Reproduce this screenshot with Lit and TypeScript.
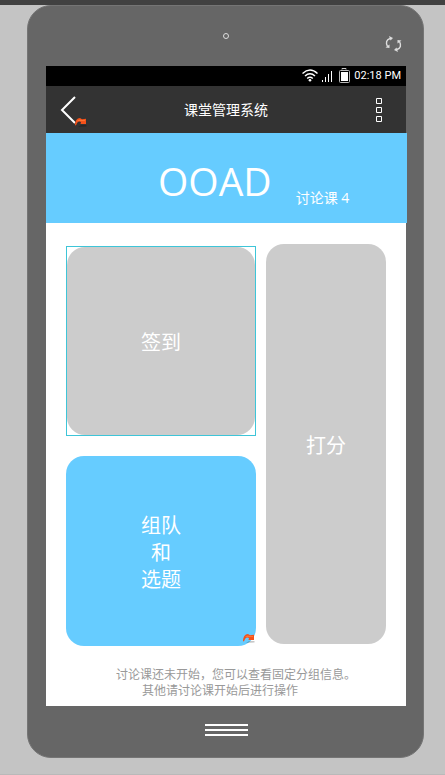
import { LitElement, html, css, svg } from "lit";
import { customElement, property } from "lit/decorators.js";

const LINK_MARK = svg`
  <path d="M3 10L6 8H11.500V9.500Z" fill="#000" opacity=".22"/>
  <path d="M0 8.500C0 4 2 1 5 1L7 2.200L11 1.800V7H5.500L6 5C3.500 3.500 2 5.500 1.200 8Z" fill="#f4511a"/>
  <path d="M2 4Q4 1.500 7 3H10V4H6Z" fill="#ff7330"/>`;

@customElement("link-mark")
export class LinkMark extends LitElement {
  static styles = css`
    :host { display: block; width: 12px; height: 11px; pointer-events: none; }
    svg { display: block; }
  `;
  render() {
    return html`<svg width="12" height="11" viewBox="0 0 12 11" aria-hidden="true">${LINK_MARK}</svg>`;
  }
}

@customElement("status-bar")
export class StatusBar extends LitElement {
  @property() time = "";

  static styles = css`
    :host {
      display: flex; align-items: center; justify-content: flex-end; gap: 4px;
      height: 20px; padding: 0 5px; background: #000; color: #fff;
      font: 11px/20px Roboto, "Noto Sans", sans-serif;
    }
    svg { display: block; }
  `;

  render() {
    return html`
      <svg width="48" height="16" viewBox="0 0 48 16" fill="none" stroke="#fff" aria-hidden="true">
        <path d="M0.500 5.500Q8 -1.500 15.500 5.500M3 8Q8 3.500 13 8M5.200 10.500Q8 8 10.800 10.500" stroke-width="1.500"/>
        <circle cx="8" cy="12.300" r="1.300" fill="#fff" stroke="none"/>
        <path d="M20.500 12V14M23.500 9V14M26.500 6V14M29.500 3V14" stroke-width="1"/>
        <path d="M40 1.500V0.500H44V1.500" stroke="#ccc"/>
        <rect x="37.500" y="2.500" width="10" height="12" rx="1" stroke="#bbb"/>
        <rect x="39" y="4" width="7" height="9" fill="#fff" stroke="none"/>
      </svg>
      <time>${this.time}</time>`;
  }
}

@customElement("app-root")
export class AppRoot extends LitElement {
  static styles = css`
    :host {
      display: block; box-sizing: border-box; min-height: 100vh;
      border-top: 5px solid #414141; border-bottom: 1px solid #b9b9b9;
      padding: 0 21px 16px 27px; background: #c4c4c4;
      font-family: "Open Sans", "Noto Sans CJK SC", sans-serif;
    }
    button {
      border: 0; padding: 0; margin: 0; background: none; color: inherit;
      font: inherit; cursor: pointer;
    }
    svg { display: block; }
    .phone {
      box-sizing: border-box; border: 1px solid #757575; border-radius: 24px;
      background: #666; padding: 0 17px 0 18px;
    }
    .top {
      position: relative; height: 60px; display: flex; justify-content: center;
    }
    .camera {
      width: 6px; height: 6px; box-sizing: border-box; margin-top: 27px;
      border: 1px solid #ddd; border-radius: 50%;
    }
    .rotate { position: absolute; right: 4px; top: 30px; }
    .screen { background: #fff; }
    .nav {
      position: relative; height: 47px; display: grid; align-items: center;
      grid-template-columns: 1fr auto 1fr; padding: 0 24px 0 14px;
      background: #333; color: #fff;
    }
    .nav h1 { margin: 0; padding-left: 10px; font-size: 14px; line-height: 20px; font-weight: 400; }
    .back { justify-self: start; }
    .menu { justify-self: end; }
    .nav-mark { position: absolute; left: 29px; top: 31px; }
    .hero {
      display: flex; align-items: center; gap: 24px; height: 90px;
      margin-right: -1px; padding-left: 112px; box-sizing: border-box;
      background: #6cf; color: #fff;
    }
    .hero h2 { margin: 0; padding-top: 6px; font-size: 39px; line-height: 50px; font-weight: 400; }
    .hero p { margin: 0; padding-top: 40px; font-size: 14px; line-height: 20px; }
    .tiles {
      display: grid; grid-template-columns: 190fr 120fr; gap: 20px 10px;
      padding: 23px 20px 0;
    }
    .tile {
      position: relative; height: 190px; border-radius: 18px; padding-top: 2px;
      background: #ccc; color: #fff; font-size: 20px; line-height: 27px;
    }
    .tile span { display: block; }
    .frame { border: 1px solid #3ec5d8; box-sizing: border-box; height: 190px; display: grid; }
    .frame .tile { height: auto; }
    .tall { grid-row: span 2; height: 400px; margin-top: -2px; }
    .blue { background: #6cf; }
    .tile-mark { position: absolute; right: 1px; bottom: 2px; }
    .note {
      margin: 0; padding: 21px 20px 7px 70px; color: #999;
      font-size: 12px; line-height: 16px;
    }
    .note span { display: block; }
    .note .second { padding-left: 26px; }
    .bottom { height: 51px; display: flex; justify-content: center; align-items: flex-start; }
    .home {
      display: grid; gap: 3px; width: 43px; margin-top: 18px;
    }
    .home i { display: block; height: 2px; background: #fff; }
  `;

  render() {
    return html`
      <div class="phone">
        <div class="top">
          <div class="camera"></div>
          <button class="rotate" aria-label="旋转">
            <svg width="17" height="16" viewBox="0 0 17 16" fill="none" stroke="#ddd" stroke-width="1.400">
              <path d="M2.500 10.500Q-0.500 4.500 5 2.500"/>
              <path d="M14.500 5.500Q17.500 11.500 12 13.500"/>
              <path d="M4 0L8 2L5.500 4.500ZM0.500 11.500L4.500 8.500V12ZM13 16L9 14L11.500 11.500ZM16.500 4.500L12.500 7.500V4Z" fill="#ddd" stroke="none"/>
            </svg>
          </button>
        </div>
        <main class="screen">
          <status-bar .time=${"02:18 PM"}></status-bar>
          <header class="nav">
            <button class="back" aria-label="返回">
              <svg width="16" height="28" viewBox="0 0 16 28" fill="none" stroke="#fff" stroke-width="2">
                <path d="M15 1L2 14L15 27"/>
              </svg>
            </button>
            <h1>课堂管理系统</h1>
            <button class="menu" aria-label="菜单">
              <svg width="16" height="24" viewBox="0 0 16 24" fill="none" stroke="#fff">
                <path d="M10.500 0.500h5v5h-5zM10.500 9.500h5v5h-5zM10.500 18.500h5v5h-5z"/>
              </svg>
            </button>
            <link-mark class="nav-mark"></link-mark>
          </header>
          <section class="hero">
            <h2>OOAD</h2>
            <p>讨论课 4</p>
          </section>
          <div class="tiles">
            <div class="frame"><button class="tile">签到</button></div>
            <button class="tile tall">打分</button>
            <button class="tile blue">
              <span>组队</span><span>和</span><span>选题</span>
              <link-mark class="tile-mark"></link-mark>
            </button>
          </div>
          <p class="note">
            <span>讨论课还未开始，您可以查看固定分组信息。</span>
            <span class="second">其他请讨论课开始后进行操作</span>
          </p>
        </main>
        <div class="bottom">
          <button class="home" aria-label="主页"><i></i><i></i><i></i></button>
        </div>
      </div>`;
  }
}
